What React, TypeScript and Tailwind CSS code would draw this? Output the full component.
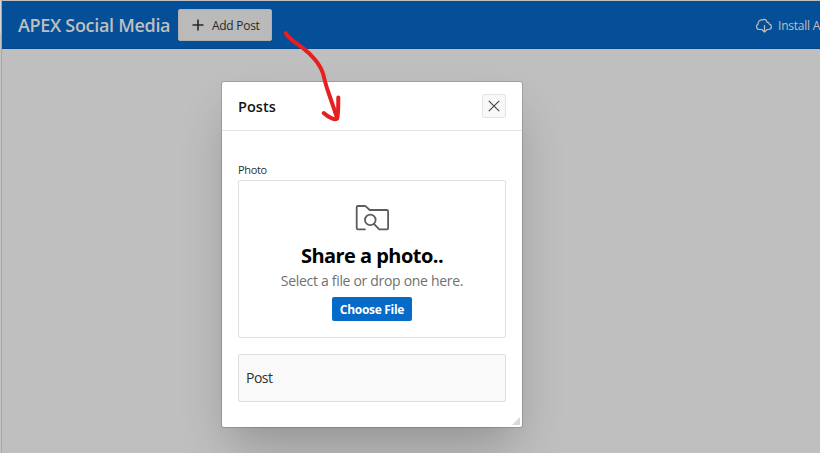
import React from "react";

function AppHeader() {
  return (
    <header className="flex h-12 w-full items-center overflow-hidden border-b border-[#04488a] bg-[#044f97] pl-4">
      <h1 className="w-[160px] shrink-0 whitespace-nowrap pt-px text-[18px] leading-6 font-semibold tracking-[-0.31px] text-[#bfbfbf]">
        APEX Social Media
      </h1>
      <button className="flex h-8 w-[94px] shrink-0 items-center rounded-[2px] border border-[#b0b0b0] bg-[#bababa] pl-[13px] text-[#292929]">
        <svg width="12" height="12" viewBox="0 0 12 12" fill="none" stroke="currentColor" strokeWidth="1.6">
          <path d="M6 .5v11M.5 6h11" />
        </svg>
        <span className="ml-[8px] whitespace-nowrap pt-[2px] text-[12px] leading-4 tracking-[-0.28px]">Add Post</span>
      </button>
      <a className="ml-[484px] flex shrink-0 items-center whitespace-nowrap pt-[2px] text-[12px] leading-4 tracking-[-0.22px] text-[#bfbfbf]">
        <svg className="mr-[6px]" width="16" height="16" viewBox="0 0 16 16" fill="none" stroke="currentColor" strokeWidth="1.2" strokeLinecap="round" strokeLinejoin="round">
          <path d="M5.800 11.500H3.500A2.900 2.900 0 0 1 2.200 6C1.800 3 4.500 1.300 6.200 2.100 8 .7 10.800 1.500 11.100 4.400c1.300-.1 2.100.6 2.200 1.800 1.200.3 2.100 1.300 2.100 2.600 0 1.600-1.200 2.700-2.800 2.700h-1.400M8.500 7.500V14M6.300 12l2.200 2.200 2.200-2.200" />
        </svg>
        Install A
      </a>
    </header>
  );
}

function PhotoDropzone() {
  return (
    <div className="flex h-[158px] flex-col items-center rounded-[2px] border border-[#dfdfdf] bg-white pt-6">
      <svg width="34" height="26" viewBox="0 0 34 26" fill="none" stroke="#5c5c5c" strokeWidth="1.8" strokeLinejoin="round" strokeLinecap="round">
        <path d="M10 24.300H3a1.300 1.300 0 0 1-1.300-1.300V2.200A1.200 1.200 0 0 1 2.900 1h6.800c.6 0 1 .2 1.400.6L14.700 5h17.100A1.300 1.300 0 0 1 33.100 6.300V23a1.300 1.300 0 0 1-1.300 1.300h-7.500l-5.400-5.500" />
        <circle cx="15.300" cy="14.900" r="5.300" />
      </svg>
      <h3 className="mt-[11px] whitespace-nowrap text-[20px] leading-7 font-bold tracking-[-0.54px] text-black">Share a photo..</h3>
      <p className="mt-px whitespace-nowrap text-[14px] leading-5 tracking-[-0.31px] text-[#707070]">Select a file or drop one here.</p>
      <button className="mt-[6px] h-6 w-20 shrink-0 whitespace-nowrap rounded-[2px] bg-[#056ac8] pt-px text-[12px] leading-4 font-bold tracking-[-0.3px] text-white">
        Choose File
      </button>
    </div>
  );
}

function PostsDialog() {
  return (
    <section role="dialog" aria-label="Posts" className="relative ml-[220px] mt-[33px] h-[345px] w-[300px] rounded-[2px] bg-white shadow-[0_0_0_1px_rgba(0,0,0,0.15),0_25px_46px_-8px_rgba(0,0,0,0.24)]">
      <div className="flex h-[49px] items-center justify-between border-b border-[#e2e2e2] px-4">
        <h2 className="pt-px text-[14.5px] leading-5 font-semibold tracking-[0.05px] text-[#161513]">Posts</h2>
        <button aria-label="Close" className="flex size-6 items-center justify-center rounded-[2px] border border-[#e4e4e4] bg-[#f8f8f8]">
          <svg className="-mt-px" width="12" height="12" viewBox="0 0 12 12" fill="none" stroke="#484848" strokeWidth="1.2">
            <path d="m.8.8 10.400 10.400M11.200.8.8 11.200" />
          </svg>
        </button>
      </div>
      <div className="px-4 pt-[31px]">
        <label className="block h-[18px] text-[11px] leading-4 tracking-[-0.32px] text-[#303030]">Photo</label>
        <PhotoDropzone />
        <div className="mt-4 flex h-12 items-center rounded-[2px] border border-[#dedede] bg-[#f9f9f9] pl-[7px] text-[14px] leading-5 tracking-[-0.5px] text-[#303030]">
          Post
        </div>
      </div>
      <svg className="absolute bottom-[2px] right-[2px]" width="8" height="8" viewBox="0 0 8 8" fill="#d8d8d8">
        <path d="M8 0v8H0z" />
      </svg>
    </section>
  );
}

function ArrowAnnotation() {
  return (
    <svg className="pointer-events-none absolute left-[270px] top-[20px]" width="90" height="115" viewBox="0 0 90 115" fill="none" stroke="#e81f20" strokeWidth="4" strokeLinecap="round" strokeLinejoin="round">
      <path d="M15.800 13.200C19 19 27 23.500 33.300 28.300C41 34 50 44 53 53.500C55 61 56 66 58.300 72L65 91.700" />
      <path d="M68.300 77.500C68.200 85 68.500 92 67.200 98.500C65.500 101 58 97 53.700 93" />
      <path d="M65 91.700L67 98" />
    </svg>
  );
}

export default function App() {
  return (
    <div className="relative flex h-[453px] w-[820px] overflow-hidden bg-[#bfbfbf] font-['Open_Sans','Noto_Sans',sans-serif]">
      <div className="w-[2px] shrink-0">
        <div className="h-[33px] border-r border-[#a9a9a9] bg-[#d5d5d5]" />
        <div className="h-[420px] border-r border-[#a7a7a7] bg-[#c3c3c3]" />
      </div>
      <main className="w-[818px] shrink-0 pt-px">
        <AppHeader />
        <PostsDialog />
      </main>
      <ArrowAnnotation />
    </div>
  );
}
